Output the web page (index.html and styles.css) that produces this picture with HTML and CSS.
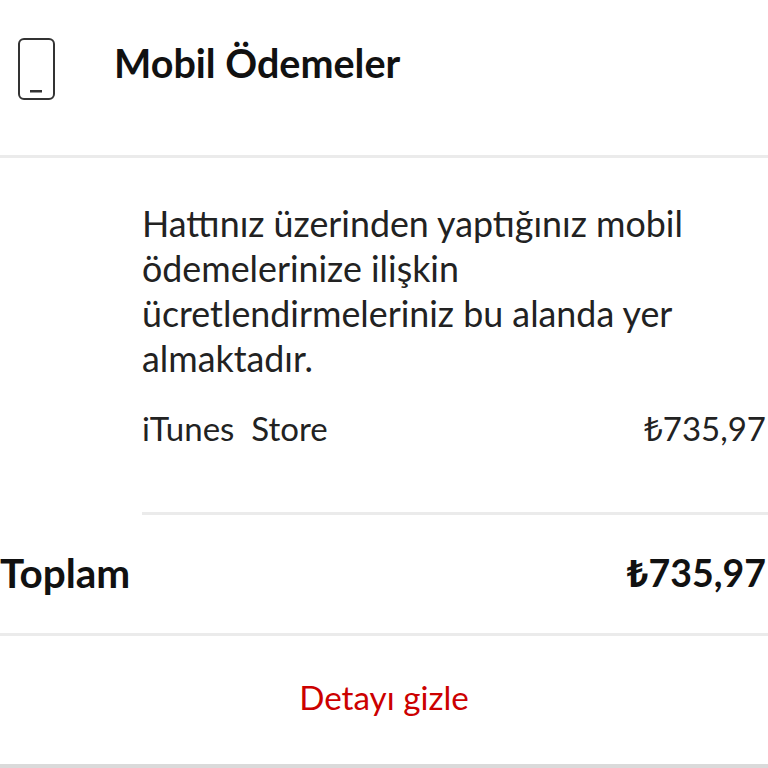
FILE: index.html
```html
<!DOCTYPE html>
<html lang="tr">
<head>
    <meta charset="UTF-8">
    <meta name="viewport" content="width=device-width, initial-scale=1.0">
    <title>Mobil Ödemeler</title>
    <link rel="stylesheet" href="styles.css">
</head>
<body>
    <header class="header">
        <svg class="phone-icon" width="40" height="64" viewBox="0 0 40 64" fill="none">
            <rect x="2" y="2" width="35" height="60" rx="5" stroke="#333" stroke-width="2"/>
            <rect x="13" y="53" width="12" height="2.5" fill="#333"/>
        </svg>
        <h1>Mobil Ödemeler</h1>
    </header>

    <section class="details">
        <p class="intro">Hattınız üzerinden yaptığınız mobil ödemelerinize ilişkin ücretlendirmeleriniz bu alanda yer almaktadır.</p>
        <div class="item">
            <span>iTunes&nbsp; Store</span>
            <span><span class="lira">₺</span>735,97</span>
        </div>
    </section>

    <section class="total">
        <span class="total-label">Toplam</span>
        <span><span class="lira">₺</span>735,97</span>
    </section>

    <div class="toggle">Detayı gizle</div>
</body>
</html>
```

FILE: styles.css
```css
html, body { margin: 0; padding: 0; }
body { font-family: "Lato", "Noto Sans", sans-serif; background-color: #FFFFFF; color: #111111; height: 768px; overflow: hidden; }
.header { display: flex; align-items: center; height: 155px; padding-left: 17px; border-bottom: 3px solid #EBEBEB; }
.phone-icon { flex: none; margin-top: -18px; }
.header h1 { margin: -30px 0 0 57px; font-size: 39.5px; font-weight: 700; }
.details { margin-left: 142px; padding-top: 43px; border-bottom: 3px solid #EBEBEB; height: 311px; }
.intro { margin: 0; font-size: 35.8px; line-height: 45px; color: #222222; width: 560px; }
.item { display: flex; justify-content: space-between; margin-top: 25px; padding-right: 2px; font-size: 33px; line-height: 45px; color: #222222; }
.total { display: flex; justify-content: space-between; align-items: center; height: 114px; padding: 0 2px 4px 0; border-bottom: 3px solid #EBEBEB; font-size: 37.5px; font-weight: 700; }
.total-label { font-size: 40.5px; }
.lira { font-family: "Noto Sans", sans-serif; }
.toggle { height: 122px; padding-bottom: 6px; display: flex; align-items: center; justify-content: center; border-bottom: 5px solid #DADADA; font-size: 33.2px; color: #CC0000; }
```
